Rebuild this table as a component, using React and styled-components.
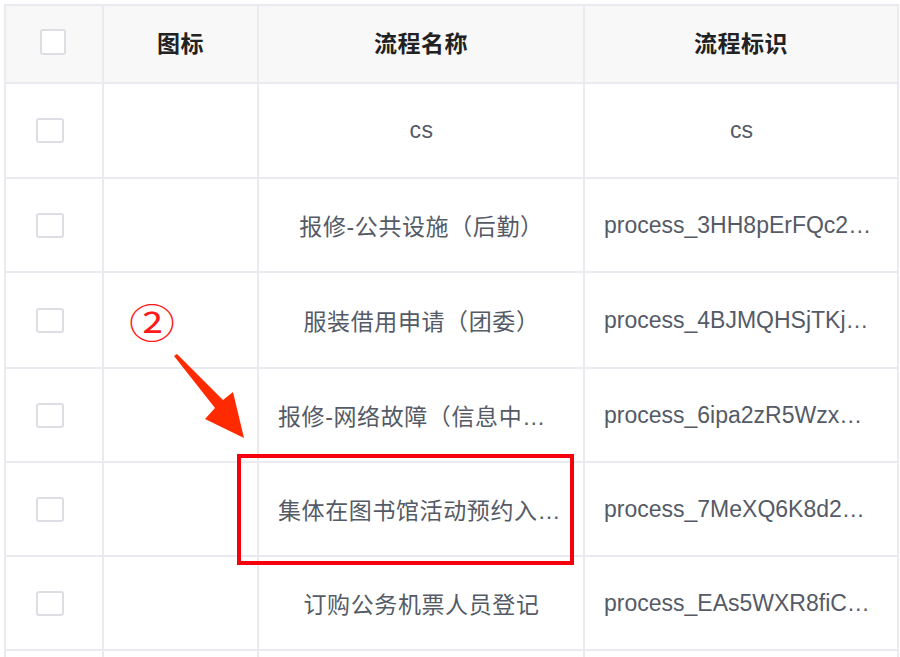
import React from "react";
import styled, { createGlobalStyle } from "styled-components";

const GlobalStyle = createGlobalStyle`
  html, body {
    margin: 0;
    padding: 0;
    background: #fff;
    overflow: hidden;
  }
  body {
    font-family: "Liberation Sans", "Noto Sans CJK SC", sans-serif;
  }
`;

// clipped = the text was cut off by the cell, so it starts at the left padding
const rows = [
  { h: 95, name: "cs", key: "cs" },
  { h: 94, name: "报修-公共设施（后勤）", key: "process_3HH8pErFQc2…", keyClip: true },
  { h: 96, name: "服装借用申请（团委）", key: "process_4BJMQHSjTKj…", keyClip: true },
  { h: 94, name: "报修-网络故障（信息中…", key: "process_6ipa2zR5Wzx…", nameClip: true, keyClip: true },
  { h: 94, name: "集体在图书馆活动预约入…", key: "process_7MeXQ6K8d2…", nameClip: true, keyClip: true },
  { h: 94, name: "订购公务机票人员登记", key: "process_EAs5WXR8fiC…", keyClip: true },
  { h: 94, name: "", key: "" },
];

const App = () => {
  return (
    <Page>
      <GlobalStyle />
      <Table>
        <colgroup>
          <col style={{ width: 98 }} />
          <col style={{ width: 155 }} />
          <col style={{ width: 326 }} />
          <col style={{ width: 314 }} />
        </colgroup>
        <thead>
          <tr>
            <HeadCell>
              <Checkbox $head />
            </HeadCell>
            <HeadCell>图标</HeadCell>
            <HeadCell>流程名称</HeadCell>
            <HeadCell>流程标识</HeadCell>
          </tr>
        </thead>
        <tbody>
          {rows.map((r, i) => (
            <Row key={i} $h={r.h}>
              <Cell>
                <Checkbox />
              </Cell>
              <Cell />
              <TextCell $clip={r.nameClip} $cjk>
                {r.name}
              </TextCell>
              <TextCell $clip={r.keyClip}>{r.key}</TextCell>
            </Row>
          ))}
        </tbody>
      </Table>

      <Marker>②</Marker>
      <Arrow width="80" height="90" viewBox="0 0 80 90">
        <polygon points="0,2 3,0 49,46 59,38 70,84 31,65 41,54" fill="#ff2a00" />
      </Arrow>
      <Highlight />
    </Page>
  );
};

const Page = styled.div`
  position: relative;
  padding: 4px 0 0 4px;
  height: 653px;
  overflow: hidden;
`;

const Table = styled.table`
  border-collapse: collapse;
  table-layout: fixed;
  width: 894px;
  border: 2px solid #e9ebf0;
  font-size: 23px;
  color: #555b66;
`;

const HeadCell = styled.th`
  box-sizing: border-box;
  height: 78px;
  background: #f8f8f9;
  border: 2px solid #e9ebf0;
  color: #222;
  font-weight: bold;
  letter-spacing: 0.5px;
  text-align: center;
  vertical-align: middle;
  padding: 0 18px 5px;
`;

const Row = styled.tr`
  height: ${(p) => p.$h}px;
`;

const Cell = styled.td`
  border: 2px solid #e9ebf0;
  vertical-align: middle;
  padding: 0;
  text-align: center;
`;

const TextCell = styled(Cell)`
  padding: 0 18px 0 19px;
  white-space: nowrap;
  overflow: hidden;
  text-overflow: clip;
  text-align: ${(p) => (p.$clip ? "left" : "center")};
  letter-spacing: ${(p) => (p.$cjk ? "0.6px" : "0")};
`;

const Checkbox = styled.span`
  display: block;
  box-sizing: border-box;
  width: ${(p) => (p.$head ? "26px" : "28px")};
  height: ${(p) => (p.$head ? "26px" : "25px")};
  margin: 0 auto;
  position: relative;
  left: ${(p) => (p.$head ? "-1px" : "-4px")};
  border: 2px solid #dcdee4;
  border-radius: 3px;
  background: #fff;
`;

const Marker = styled.span`
  position: absolute;
  left: 129px;
  top: 295px;
  font-family: "Noto Sans CJK SC", sans-serif;
  font-size: 40px;
  line-height: 52px;
  color: #ff1a1a;
  transform: scaleX(1.15);
  transform-origin: left center;
`;

const Arrow = styled.svg`
  position: absolute;
  left: 174px;
  top: 354px;
`;

const Highlight = styled.div`
  position: absolute;
  left: 237px;
  top: 454px;
  width: 337px;
  height: 111px;
  box-sizing: border-box;
  border: 4px solid #f5000c;
`;

export default App;
